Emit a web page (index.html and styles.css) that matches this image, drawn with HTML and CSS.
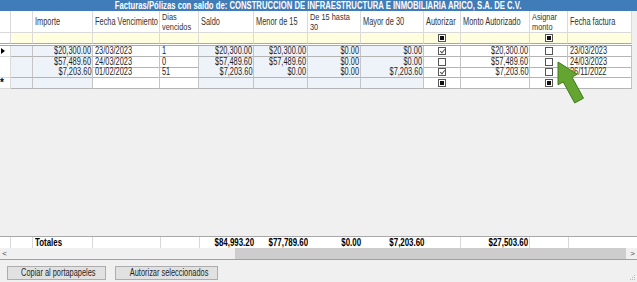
FILE: index.html
```html
<!DOCTYPE html>
<html>
<head>
<meta charset="utf-8">
<link rel="stylesheet" href="styles.css">
</head>
<body>
<div class="window">
  <div class="title"><span>Facturas/Pólizas con saldo de: CONSTRUCCION DE INFRAESTRUCTURA E INMOBILIARIA ARICO, S.A. DE C.V.</span></div>
  <div class="grid">
    <div class="row head">
      <div class="c"></div><div class="c"></div>
      <div class="c"><span>Importe</span></div>
      <div class="c"><span>Fecha Vencimiento</span></div>
      <div class="c"><span class="two">Dias<br>vencidos</span></div>
      <div class="c"><span>Saldo</span></div>
      <div class="c"><span>Menor de 15</span></div>
      <div class="c"><span class="two">De 15 hasta<br>30</span></div>
      <div class="c"><span>Mayor de 30</span></div>
      <div class="c"><span>Autorizar</span></div>
      <div class="c"><span>Monto Autorizado</span></div>
      <div class="c"><span class="two">Asignar<br>monto</span></div>
      <div class="c"><span>Fecha factura</span></div>
    </div>
    <div class="row filter">
      <div class="c rh"></div><div class="c"></div><div class="c"></div><div class="c"></div><div class="c"></div><div class="c"></div><div class="c"></div><div class="c"></div><div class="c"></div>
      <div class="c mid"><i class="cb ind"></i></div>
      <div class="c"></div>
      <div class="c mid"><i class="cb ind"></i></div>
      <div class="c"></div>
    </div>
    <div class="gap"></div>
    <div class="row data">
      <div class="c rh"><i class="cur"></i></div><div class="c ro"></div>
      <div class="c ro r"><span>$20,300.00</span></div>
      <div class="c"><span>23/03/2023</span></div>
      <div class="c"><span>1</span></div>
      <div class="c ro r"><span>$20,300.00</span></div>
      <div class="c ro r"><span>$20,300.00</span></div>
      <div class="c ro r"><span>$0.00</span></div>
      <div class="c ro r"><span>$0.00</span></div>
      <div class="c mid"><i class="cb chk"></i></div>
      <div class="c r"><span>$20,300.00</span></div>
      <div class="c mid"><i class="cb"></i></div>
      <div class="c"><span>23/03/2023</span></div>
    </div>
    <div class="row data">
      <div class="c rh"></div><div class="c ro"></div>
      <div class="c ro r"><span>$57,489.60</span></div>
      <div class="c"><span>24/03/2023</span></div>
      <div class="c"><span>0</span></div>
      <div class="c ro r"><span>$57,489.60</span></div>
      <div class="c ro r"><span>$57,489.60</span></div>
      <div class="c ro r"><span>$0.00</span></div>
      <div class="c ro r"><span>$0.00</span></div>
      <div class="c mid"><i class="cb"></i></div>
      <div class="c r"><span>$57,489.60</span></div>
      <div class="c mid"><i class="cb"></i></div>
      <div class="c"><span>24/03/2023</span></div>
    </div>
    <div class="row data">
      <div class="c rh"></div><div class="c ro"></div>
      <div class="c ro r"><span>$7,203.60</span></div>
      <div class="c"><span>01/02/2023</span></div>
      <div class="c"><span>51</span></div>
      <div class="c ro r"><span>$7,203.60</span></div>
      <div class="c ro r"><span>$0.00</span></div>
      <div class="c ro r"><span>$0.00</span></div>
      <div class="c ro r"><span>$7,203.60</span></div>
      <div class="c mid"><i class="cb chk"></i></div>
      <div class="c r"><span>$7,203.60</span></div>
      <div class="c mid"><i class="cb"></i></div>
      <div class="c"><span>26/11/2022</span></div>
    </div>
    <div class="row data">
      <div class="c rh star"><span>*</span></div><div class="c ro"></div>
      <div class="c ro"></div>
      <div class="c"></div>
      <div class="c"></div>
      <div class="c ro"></div>
      <div class="c ro"></div>
      <div class="c ro"></div>
      <div class="c ro"></div>
      <div class="c mid"><i class="cb ind"></i></div>
      <div class="c"></div>
      <div class="c mid"><i class="cb ind"></i></div>
      <div class="c"></div>
    </div>
  </div>
  <div class="space"></div>
  <div class="row totals">
    <div class="c ln"></div><div class="c ln"></div>
    <div class="c ln"><span>Totales</span></div>
    <div class="c ln"></div>
    <div class="c ln"></div>
    <div class="c r"><span>$84,993.20</span></div>
    <div class="c r"><span>$77,789.60</span></div>
    <div class="c r"><span>$0.00</span></div>
    <div class="c r"><span>$7,203.60</span></div>
    <div class="c ln"></div>
    <div class="c r ln"><span>$27,503.60</span></div>
    <div class="c ln"></div>
    <div class="c"></div>
  </div>
  <div class="hscroll">
    <span class="arrow">&lt;</span>
    <span class="track"><span class="thumb"></span></span>
    <span class="arrow">&gt;</span>
  </div>
  <div class="buttons">
    <button class="btn b1"><span>Copiar al portapapeles</span></button>
    <button class="btn b2"><span>Autorizar seleccionados</span></button>
  </div>
  <svg class="grip" width="6" height="6" viewBox="0 0 6 6">
    <rect x="4" y="0" width="1" height="1" fill="#b8b8b8"/>
    <rect x="2" y="2" width="1" height="1" fill="#b8b8b8"/>
    <rect x="4" y="2" width="1" height="1" fill="#b8b8b8"/>
    <rect x="0" y="4" width="1" height="1" fill="#b8b8b8"/>
    <rect x="2" y="4" width="1" height="1" fill="#b8b8b8"/>
    <rect x="4" y="4" width="1" height="1" fill="#b8b8b8"/>
  </svg>
  <svg class="pointer" width="40" height="50" viewBox="0 0 40 50">
    <polygon points="8,4 27.2,16.2 22,19.1 33.5,40.2 24.7,45 13.2,23.9 8,26.8" fill="#64a532" stroke="#3f7a1c" stroke-width="1"/>
  </svg>
</div>
</body>
</html>
```
FILE: styles.css
```css
html, body {
  margin: 0;
  padding: 0;
}
body {
  background: #f0f0f0;
  font-family: "Liberation Sans", Arial, sans-serif;
  font-size: 10px;
  color: #1e1e1e;
}
.window {
  position: relative;
  width: 637px;
  height: 282px;
  overflow: hidden;
  display: flex;
  flex-direction: column;
  background: #f0f0f0;
}
/* condensed text: the UI font is narrower than any installed family */
.c > span, .btn > span {
  display: inline-block;
  transform: scaleX(0.74);
  transform-origin: left center;
}
.c.r > span { transform-origin: right center; }
.btn > span { transform-origin: center center; }
.title {
  height: 11px;
  flex: none;
  background: #3f7cb8;
  color: #fff;
  font-weight: bold;
  font-size: 10px;
  line-height: 11px;
  display: flex;
  justify-content: center;
  white-space: nowrap;
}
.title > span {
  display: inline-block;
  transform: scaleX(0.77);
  transform-origin: center center;
}
.grid {
  flex: none;
  width: 632px;
}
.row {
  display: grid;
  grid-template-columns: 11px 22px 60px 67px 39px 55px 54px 53px 63px 37px 69px 38px 64px;
}
.c {
  box-sizing: border-box;
  display: flex;
  align-items: center;
  padding: 0 2px;
  white-space: nowrap;
  line-height: 10px;
  min-width: 0;
}
.c.r { justify-content: flex-end; padding-right: 1px; }
.c.mid { justify-content: center; padding: 0; }
.head {
  height: 22px;
  background: #fff;
}
.head .c {
  border-right: 1px solid #dadada;
  border-bottom: 1px solid #dadada;
  padding-top: 1px;
  color: #333;
}
.head .c > span.two {
  font-size: 9px;
  line-height: 10px;
  transform: scaleX(0.82);
}
.filter {
  height: 11px;
  background: #ffffe0;
}
.filter .c {
  border-right: 1px solid #dadada;
  border-bottom: 1px solid #a8a8a8;
}
.filter .rh, .data .rh { background: #fff; }
.gap {
  height: 2px;
  background: #fff;
  border-bottom: 1px solid #a8a8a8;
  box-sizing: border-box;
  width: 632px;
}
.data {
  height: 10.5px;
  background: #fff;
}
.data .c {
  border-right: 1px solid #c4c4c4;
  border-bottom: 1px solid #b4b4b4;
}
.data .rh { border-right-color: #dadada; border-bottom-color: #dadada; padding: 0; }
.data .ro { background: #eef3fa; }
.cur {
  width: 0;
  height: 0;
  border-top: 3px solid transparent;
  border-bottom: 3px solid transparent;
  border-left: 4px solid #000;
  margin-left: 1px;
}
.star {
  font-weight: bold;
  padding-left: 1px;
  color: #000;
}
.star > span { transform: none; }
.cb {
  box-sizing: border-box;
  width: 8px;
  height: 8px;
  border: 1px solid #555;
  background: #fff;
  position: relative;
  display: block;
}
.cb.ind::after {
  content: "";
  position: absolute;
  left: 1px;
  top: 1px;
  width: 4px;
  height: 4px;
  background: #111;
}
.cb.chk::after {
  content: "";
  position: absolute;
  left: 2px;
  top: 0;
  width: 2px;
  height: 4px;
  border-right: 1px solid #555;
  border-bottom: 1px solid #555;
  transform: rotate(40deg);
}
.space {
  flex: 1;
}
.totals {
  height: 12px;
  flex: none;
  background: #fff;
  border-top: 1px solid #a8a8a8;
  box-sizing: border-box;
  font-weight: bold;
  color: #000;
  grid-template-columns: 11px 22px 60px 68px 39px 55px 54px 53px 63px 36px 69px 39px 68px;
}
.totals .c { line-height: 11px; }
.totals .c > span { transform: scaleX(0.79); }
.totals .ln { border-right: 1px solid #d8d8d8; }
.hscroll {
  height: 12px;
  flex: none;
  display: flex;
  align-items: center;
  background: #f0f0f0;
  border-bottom: 1px solid #a0a0a0;
  box-sizing: border-box;
}
.arrow {
  width: 9px;
  text-align: center;
  font-size: 8px;
  color: #444;
  flex: none;
}
.track {
  flex: 1;
  height: 100%;
  display: flex;
  padding-left: 226px;
  padding-right: 2px;
}
.thumb {
  flex: 1;
  background: #cdcdcd;
}
.buttons {
  height: 22px;
  flex: none;
  display: flex;
  gap: 9px;
  padding: 6px 0 0 7px;
  box-sizing: border-box;
}
.btn {
  height: 14px;
  padding: 0;
  margin: 0;
  background: #e1e1e1;
  border: 1px solid #adadad;
  font-family: inherit;
  font-size: 10px;
  color: #1e1e1e;
  line-height: 12px;
  white-space: nowrap;
  overflow: hidden;
}
.b1 { width: 99px; }
.b2 { width: 103px; }
.grip {
  position: absolute;
  right: 1px;
  bottom: 1px;
}
.pointer {
  position: absolute;
  left: 550px;
  top: 58px;
}
```
